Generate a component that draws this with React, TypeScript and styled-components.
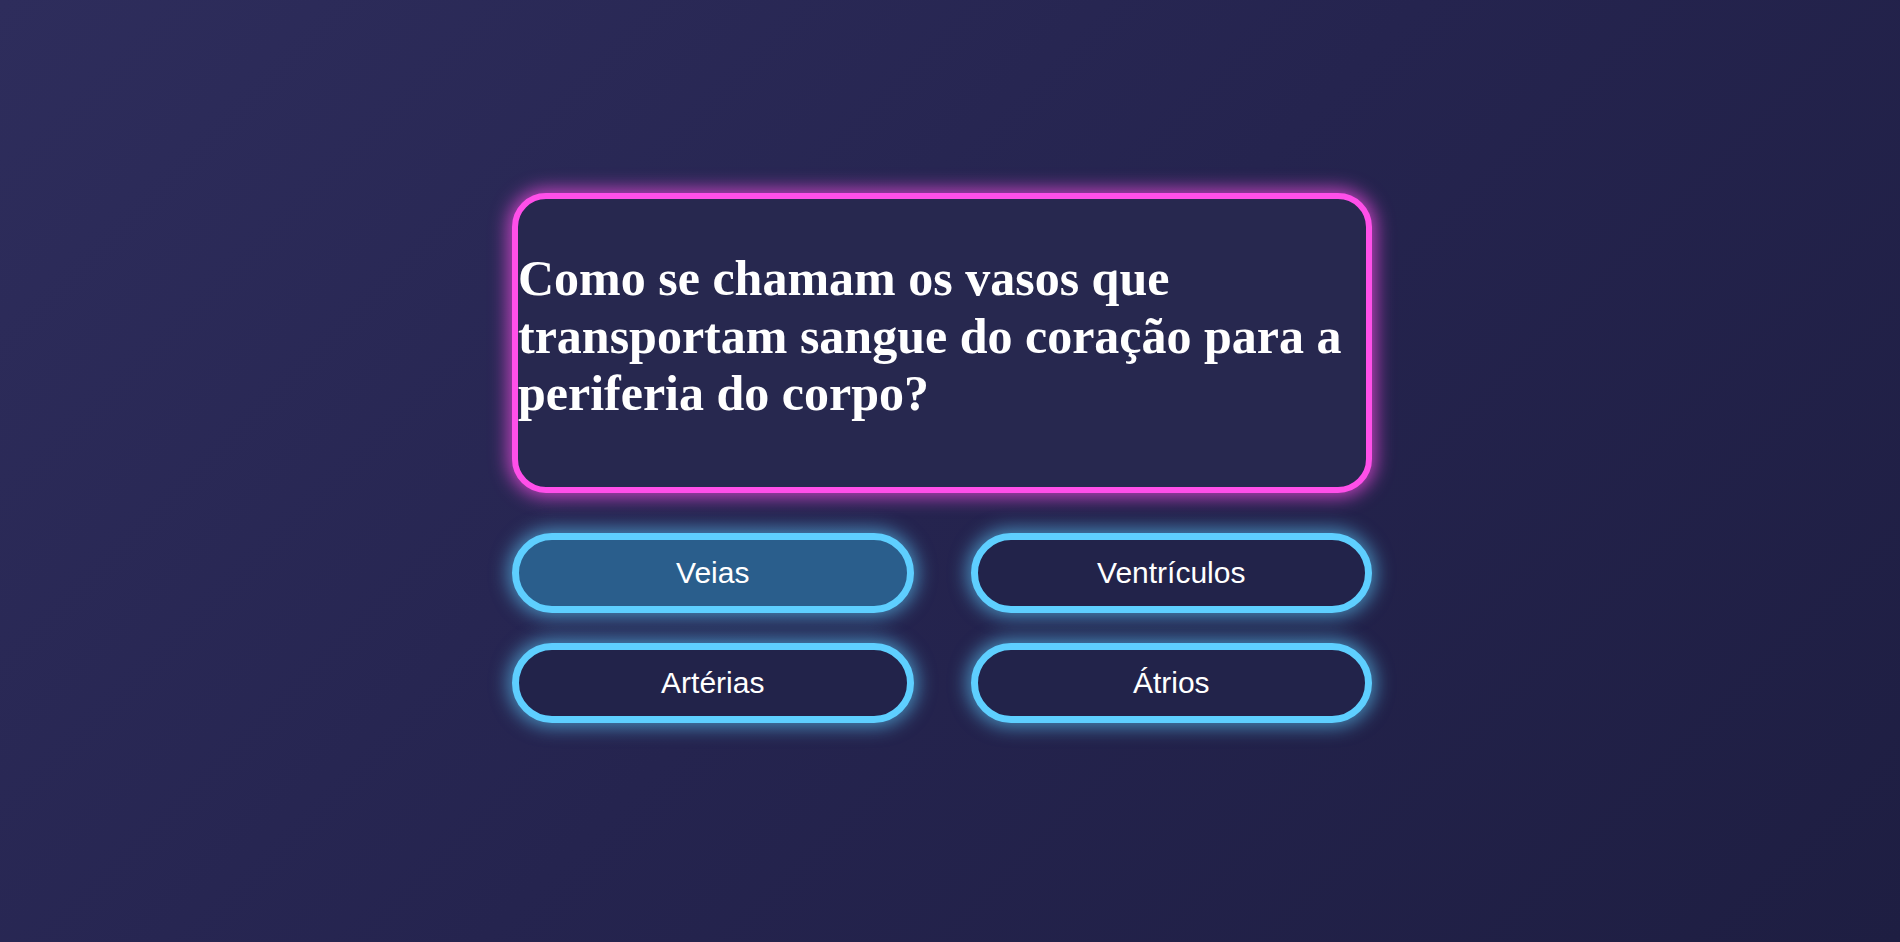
import React from 'react';
import styled, { createGlobalStyle, css } from 'styled-components';

const GlobalStyle = createGlobalStyle`
  html, body {
    margin: 0;
    padding: 0;
  }
  body {
    font-family: "Liberation Serif", "Times New Roman", serif;
  }
`;

const Page = styled.div`
  min-height: 100vh;
  box-sizing: border-box;
  background: linear-gradient(135deg, #2e2d5c 0%, #25244f 50%, #1e1e42 100%);
  display: flex;
  flex-direction: column;
  align-items: center;
  justify-content: center;
  padding: 0 16px 26px 0;
`;

const Quiz = styled.div`
  width: 860px;
  display: flex;
  flex-direction: column;
  gap: 40px;
`;

const QuestionBox = styled.div`
  box-sizing: border-box;
  height: 300px;
  padding-top: 51px;
  background: #27284f;
  border: 6px solid #ff4fe9;
  border-radius: 34px;
  box-shadow: 0 0 18px 4px rgba(255, 79, 233, 0.7);
`;

const Question = styled.h2`
  margin: 0;
  color: #ffffff;
  font-family: "Liberation Serif", "Times New Roman", serif;
  font-weight: 700;
  font-size: 50px;
  line-height: 57.5px;
`;

const Answers = styled.div`
  display: grid;
  grid-template-columns: 1fr 1fr;
  column-gap: 57px;
  row-gap: 30px;
`;

const Answer = styled.button<{ $active?: boolean }>`
  box-sizing: border-box;
  height: 80px;
  border: 7px solid #5ecfff;
  border-radius: 40px;
  background: #22234a;
  color: #ffffff;
  font-family: "Liberation Sans", Arial, sans-serif;
  font-size: 30px;
  cursor: pointer;
  box-shadow: 0 0 18px 4px rgba(94, 207, 255, 0.6);
  ${(p) =>
    p.$active &&
    css`
      background: #2a5e8c;
    `}
`;

const answers = ['Veias', 'Ventrículos', 'Artérias', 'Átrios'];

export default function App() {
  return (
    <>
      <GlobalStyle />
      <Page>
        <Quiz>
          <QuestionBox>
            <Question>
              Como se chamam os vasos que transportam sangue do coração para a periferia do corpo?
            </Question>
          </QuestionBox>
          <Answers>
            {answers.map((a, i) => (
              <Answer key={a} $active={i === 0}>
                {a}
              </Answer>
            ))}
          </Answers>
        </Quiz>
      </Page>
    </>
  );
}
